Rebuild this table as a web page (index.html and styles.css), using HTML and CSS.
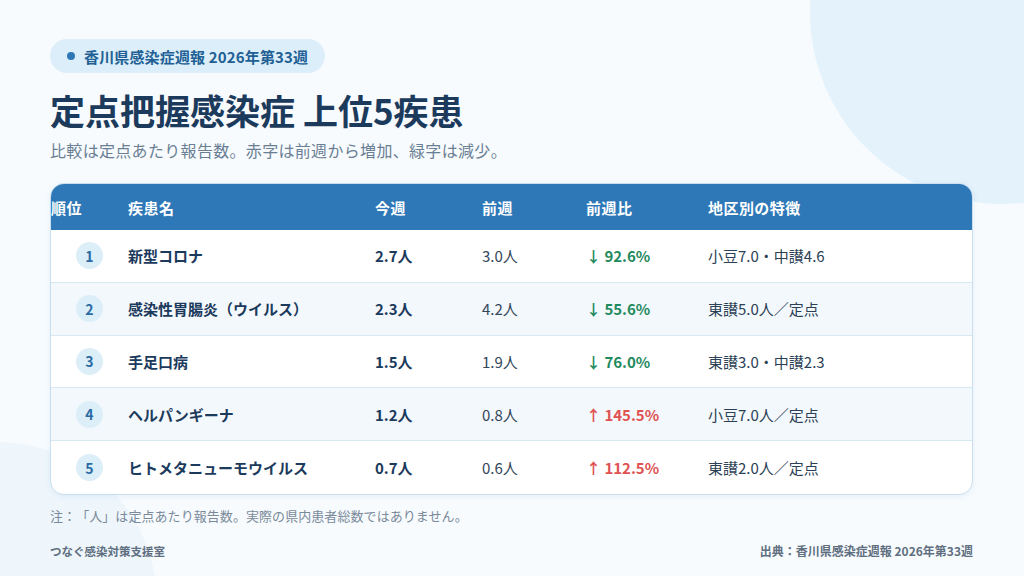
FILE: index.html
```html
<!DOCTYPE html>
<html lang="ja">
<head>
<meta charset="utf-8">
<title>定点把握感染症 上位5疾患</title>
<link rel="stylesheet" href="styles.css">
</head>
<body>
<div class="canvas">
<div class="bg-circle bg-circle-tr"></div>
<div class="bg-circle bg-circle-bl"></div>
<main class="page">
  <div class="pill"><span class="pill-dot"></span>香川県感染症週報 2026年第33週</div>
  <h1 class="title">定点把握感染症 上位5疾患</h1>
  <p class="subtitle">比較は定点あたり報告数。赤字は前週から増加、緑字は減少。</p>

  <div class="table">
    <div class="row head">
      <div class="cell c-rank">順位</div>
      <div class="cell">疾患名</div>
      <div class="cell">今週</div>
      <div class="cell">前週</div>
      <div class="cell">前週比</div>
      <div class="cell">地区別の特徴</div>
    </div>
    <div class="row">
      <div class="cell c-rank"><span class="badge">1</span></div>
      <div class="cell c-name">新型コロナ</div>
      <div class="cell c-now">2.7人</div>
      <div class="cell c-prev">3.0人</div>
      <div class="cell c-pct down">↓ 92.6%</div>
      <div class="cell c-area">小豆7.0・中讃4.6</div>
    </div>
    <div class="row alt">
      <div class="cell c-rank"><span class="badge">2</span></div>
      <div class="cell c-name">感染性胃腸炎（ウイルス）</div>
      <div class="cell c-now">2.3人</div>
      <div class="cell c-prev">4.2人</div>
      <div class="cell c-pct down">↓ 55.6%</div>
      <div class="cell c-area">東讃5.0人／定点</div>
    </div>
    <div class="row">
      <div class="cell c-rank"><span class="badge">3</span></div>
      <div class="cell c-name">手足口病</div>
      <div class="cell c-now">1.5人</div>
      <div class="cell c-prev">1.9人</div>
      <div class="cell c-pct down">↓ 76.0%</div>
      <div class="cell c-area">東讃3.0・中讃2.3</div>
    </div>
    <div class="row alt">
      <div class="cell c-rank"><span class="badge">4</span></div>
      <div class="cell c-name">ヘルパンギーナ</div>
      <div class="cell c-now">1.2人</div>
      <div class="cell c-prev">0.8人</div>
      <div class="cell c-pct up">↑ 145.5%</div>
      <div class="cell c-area">小豆7.0人／定点</div>
    </div>
    <div class="row last">
      <div class="cell c-rank"><span class="badge">5</span></div>
      <div class="cell c-name">ヒトメタニューモウイルス</div>
      <div class="cell c-now">0.7人</div>
      <div class="cell c-prev">0.6人</div>
      <div class="cell c-pct up">↑ 112.5%</div>
      <div class="cell c-area">東讃2.0人／定点</div>
    </div>
  </div>

  <p class="note">注：「人」は定点あたり報告数。実際の県内患者総数ではありません。</p>
  <footer class="footer">
    <span class="footer-left">つなぐ感染対策支援室</span>
    <span class="footer-right">出典：香川県感染症週報 2026年第33週</span>
  </footer>
</main>
</div>
</body>
</html>
```

FILE: styles.css
```css
* { box-sizing: border-box; }
html, body {
  margin: 0;
  padding: 0;
  width: 1024px;
  height: 576px;
  overflow: hidden;
}
body {
  background: #f7fbfe;
  font-family: "Noto Sans CJK JP", "Noto Sans", sans-serif;
  color: #1b3a5c;
  text-spacing-trim: space-all;
}
.canvas {
  position: relative;
  width: 1024px;
  height: 576px;
  overflow: hidden;
}
.bg-circle {
  position: absolute;
  border-radius: 50%;
  z-index: 0;
}
.bg-circle-tr {
  width: 384px;
  height: 384px;
  left: 810px;
  top: -180px;
  background: #e3f2fb;
}
.bg-circle-bl {
  width: 320px;
  height: 320px;
  left: -163px;
  top: 442px;
  background: #eef6fc;
}
.page {
  position: relative;
  z-index: 1;
  padding: 39px 51px 0 50px;
}
.pill {
  display: inline-flex;
  align-items: center;
  height: 34px;
  padding: 0 17px 0 16px;
  border-radius: 17px;
  background: #dbeef9;
  color: #215f94;
  font-size: 15px;
  font-weight: 700;
  line-height: 1;
  letter-spacing: 0.01em;
}
.pill-dot {
  width: 8px;
  height: 8px;
  border-radius: 50%;
  background: #2e78b7;
  margin-right: 9px;
  margin-left: 1px;
}
.title {
  margin: 15px 0 0;
  font-size: 35px;
  font-weight: 700;
  line-height: 44px;
  color: #1b3a5c;
}
.subtitle {
  margin: 6px 0 0;
  font-size: 16px;
  line-height: 24px;
  letter-spacing: 0.02em;
  color: #6b7f94;
}
.table {
  margin-top: 21px;
  width: 923px;
  border: 1.5px solid #c9dff0;
  border-radius: 14px;
  overflow: hidden;
  background: #ffffff;
  box-shadow: 0 2px 6px rgba(46, 120, 183, 0.08);
}
.row {
  display: grid;
  grid-template-columns: 77px 247px 107px 104px 122px 1fr;
  align-items: center;
  height: 52.8px;
  border-bottom: 1px solid #d8e8f3;
  font-size: 15px;
}
.row.alt { background: #f3f8fc; }
.row.last { border-bottom: none; }
.row.head {
  height: 46px;
  background: #2e78b7;
  color: #ffffff;
  font-weight: 700;
  letter-spacing: 0.03em;
  border-bottom: none;
}
.cell { white-space: nowrap; }
.row:not(.head) .c-rank {
  display: flex;
  justify-content: center;
}
.badge {
  width: 27px;
  height: 27px;
  border-radius: 50%;
  background: #dceef8;
  color: #2a6aa5;
  font-weight: 700;
  font-size: 14px;
  display: flex;
  align-items: center;
  justify-content: center;
}
.c-name { font-weight: 700; color: #1b3a5c; }
.c-now { font-weight: 700; color: #1b3a5c; }
.c-prev { color: #33475b; }
.c-pct { font-weight: 700; }
.c-pct.down { color: #1f8a5e; }
.c-pct.up { color: #e05252; }
.c-area { color: #2b3f55; }
.note {
  margin: 11px 0 0;
  font-size: 13px;
  line-height: 20px;
  letter-spacing: 0.005em;
  color: #7a8a9a;
}
.footer {
  display: flex;
  justify-content: space-between;
  align-items: center;
  margin-top: 16px;
  font-weight: 700;
  line-height: 18px;
  color: #5f6f80;
}
.footer-left { font-size: 11.5px; }
.footer-right { font-size: 12px; }
```
